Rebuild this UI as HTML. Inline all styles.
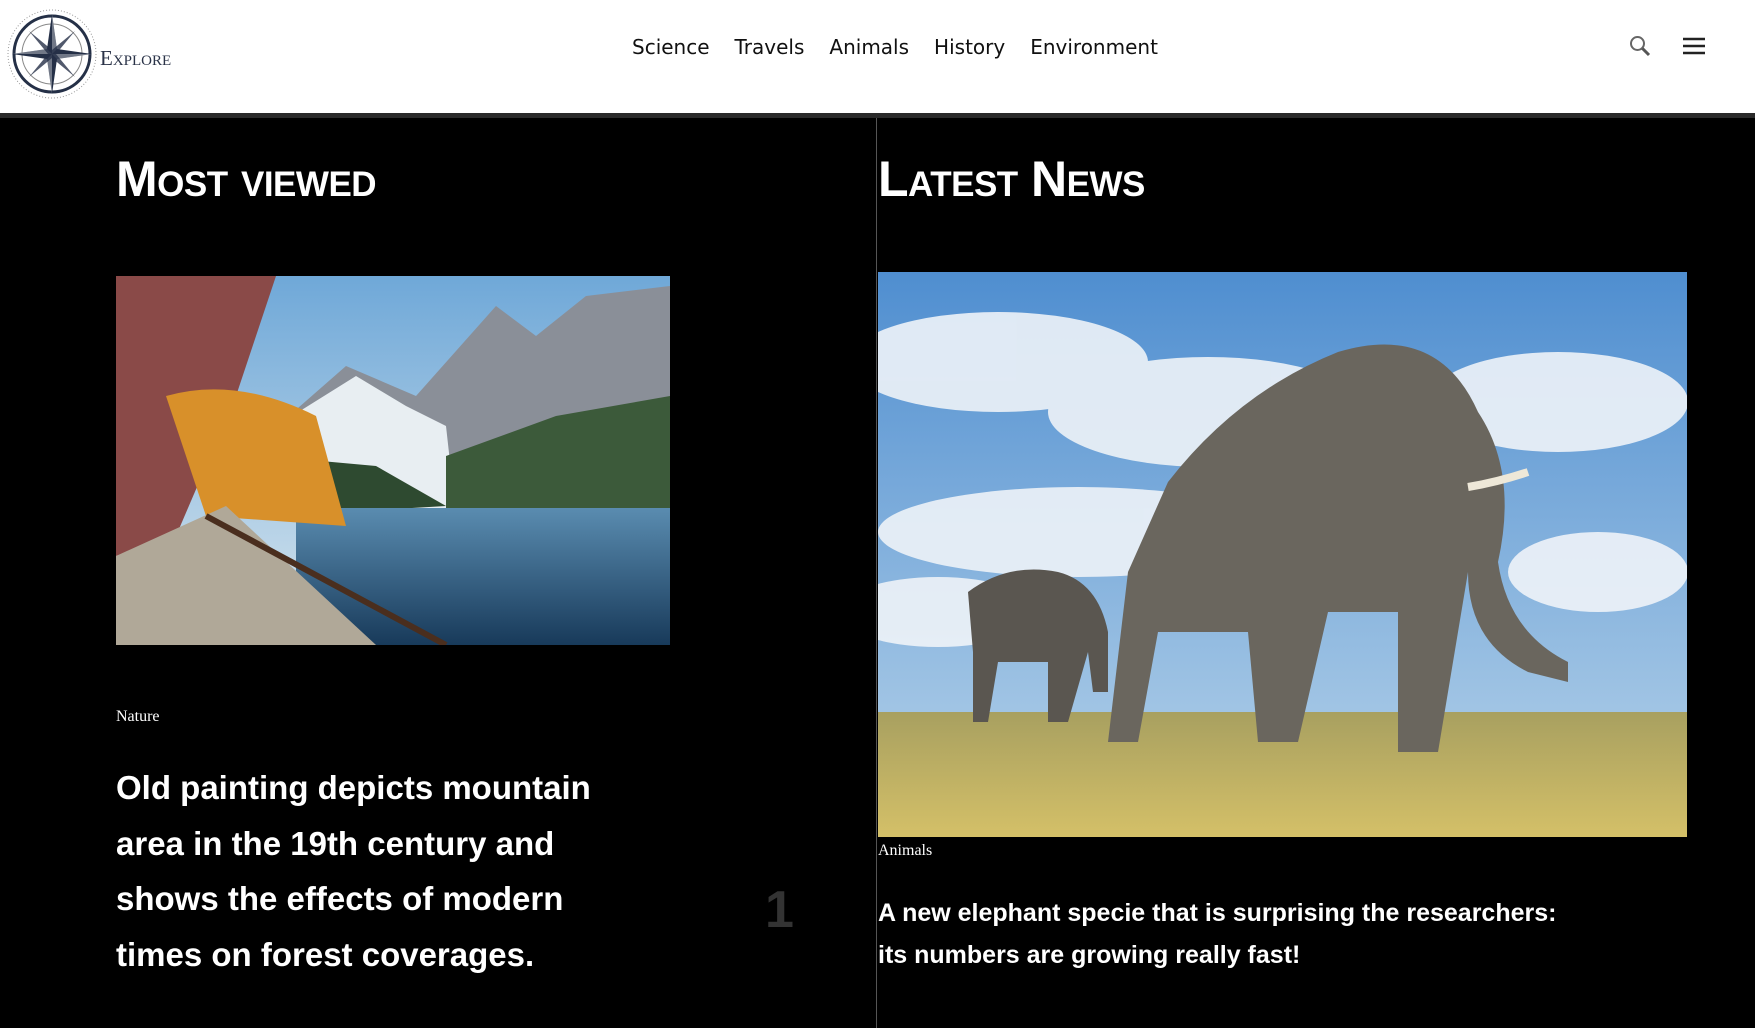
<!DOCTYPE html>
<html><head><meta charset="utf-8"><style>
*{margin:0;padding:0;box-sizing:border-box}
body{width:1755px;height:1028px;background:#000;overflow:hidden;font-family:"Liberation Sans",sans-serif;position:relative}
header{position:absolute;left:0;top:0;width:1755px;background:#fff;border-bottom:5px solid #2a2a2a;height:118px}
.logo{position:absolute;left:4px;top:6px}
.brand{position:absolute;left:100px;top:46px;font-family:"Liberation Serif",serif;font-size:21px;color:#2a3348;font-variant:small-caps}
nav{position:absolute;left:632px;top:35px;font-size:20px;color:#111;font-family:"DejaVu Sans","Liberation Sans",sans-serif}
nav span{margin-right:25px}
.narrow{font-family:"Liberation Sans Narrow","Liberation Sans",sans-serif;font-weight:bold;color:#fff}
h2{position:absolute;font-size:50px;font-variant:small-caps;letter-spacing:-0.5px}
.tag{position:absolute;font-family:"Liberation Serif",serif;font-size:16px;color:#fff}
.vl{position:absolute;left:876px;top:118px;width:1px;height:910px;background:#555}
</style></head><body>
<header>
<svg class="logo" width="96" height="96" viewBox="0 0 96 96">
<circle cx="48" cy="48" r="44" fill="none" stroke="#999" stroke-width="1" stroke-dasharray="1 2"/>
<circle cx="48" cy="48" r="38" fill="none" stroke="#253047" stroke-width="3"/>
<circle cx="48" cy="48" r="30" fill="none" stroke="#888" stroke-width="1"/>
<path d="M48 8 L53 43 L88 48 L53 53 L48 88 L43 53 L8 48 L43 43Z" fill="#253047"/>
<path d="M48 8 L53 43 L48 48Z M88 48 L53 53 L48 48Z M48 88 L43 53 L48 48Z M8 48 L43 43 L48 48Z" fill="#fff" opacity=".35"/>
<path d="M25 25 L48 44 L71 25 L52 48 L71 71 L48 52 L25 71 L44 48Z" fill="#253047" opacity=".8"/>
</svg>
<div class="brand">Explore</div>
<nav><span>Science</span><span>Travels</span><span>Animals</span><span>History</span><span>Environment</span></nav>
<svg style="position:absolute;left:1628px;top:34px" width="24" height="24" viewBox="0 0 24 24"><circle cx="9.5" cy="9.5" r="6.5" fill="none" stroke="#666" stroke-width="2"/><path d="M14.5 14.5 L21 21" stroke="#555" stroke-width="3"/></svg>
<svg style="position:absolute;left:1683px;top:37px" width="22" height="18" viewBox="0 0 22 18"><path d="M0 2H22M0 9H22M0 16H22" stroke="#222" stroke-width="2.6"/></svg>
</header>
<div class="vl"></div>
<h2 class="narrow" style="left:116px;top:150px">Most viewed</h2>
<h2 class="narrow" style="left:878px;top:150px">Latest News</h2>
<svg style="position:absolute;left:116px;top:276px" width="554" height="369" viewBox="0 0 554 369" preserveAspectRatio="none">
<defs><linearGradient id="s1" x1="0" y1="0" x2="0" y2="1"><stop offset="0" stop-color="#6fa8d8"/><stop offset="1" stop-color="#d8e6ee"/></linearGradient>
<linearGradient id="l1" x1="0" y1="0" x2="0" y2="1"><stop offset="0" stop-color="#5a8cb0"/><stop offset="1" stop-color="#183a5a"/></linearGradient></defs>
<rect width="554" height="369" fill="url(#s1)"/>
<path d="M150 160 L230 90 L300 120 L380 30 L420 60 L470 20 L554 10 L554 240 L150 240Z" fill="#8a8f98"/>
<path d="M160 150 L240 100 L290 130 L330 150 L340 240 L160 240Z" fill="#e8eef2"/>
<path d="M330 180 L440 140 L554 120 L554 240 L330 240Z" fill="#3c5a3a"/>
<path d="M150 180 L260 190 L330 230 L160 240Z" fill="#2e4a30"/>
<rect x="180" y="232" width="374" height="137" fill="url(#l1)"/>
<path d="M0 0 L160 0 L120 120 L60 260 L0 280Z" fill="#8a4a48"/>
<path d="M50 120 Q120 100 200 140 L230 250 L90 240Z" fill="#d8902a"/>
<path d="M0 280 L110 230 L260 369 L0 369Z" fill="#b0a898"/>
<path d="M90 240 L330 369" stroke="#4a2e1e" stroke-width="6"/>
</svg>
<div class="tag" style="left:116px;top:708px">Nature</div>
<div class="narrow" style="position:absolute;left:116px;top:760px;width:620px;font-size:33px;line-height:55.5px">Old painting depicts mountain<br>area in the 19th century and<br>shows the effects of modern<br>times on forest coverages.</div>
<div class="narrow" style="position:absolute;left:765px;top:880px;font-size:52px;color:#333">1</div>
<svg style="position:absolute;left:878px;top:272px" width="809" height="565" viewBox="0 0 809 565" preserveAspectRatio="none">
<defs><linearGradient id="s2" x1="0" y1="0" x2="0" y2="1"><stop offset="0" stop-color="#4f8ed0"/><stop offset="1" stop-color="#b8d4ea"/></linearGradient>
<linearGradient id="g2" x1="0" y1="0" x2="0" y2="1"><stop offset="0" stop-color="#a8a060"/><stop offset="1" stop-color="#d4c068"/></linearGradient></defs>
<rect width="809" height="565" fill="url(#s2)"/>
<g fill="#eef3f8" opacity=".9"><ellipse cx="120" cy="90" rx="150" ry="50"/><ellipse cx="330" cy="140" rx="160" ry="55"/><ellipse cx="200" cy="260" rx="200" ry="45"/><ellipse cx="680" cy="130" rx="130" ry="50"/><ellipse cx="60" cy="340" rx="100" ry="35"/><ellipse cx="720" cy="300" rx="90" ry="40"/></g>
<rect y="440" width="809" height="125" fill="url(#g2)"/>
<path d="M290 210 Q360 120 460 80 Q560 50 600 140 Q640 200 620 290 Q630 360 690 390 L690 410 L650 400 Q590 370 590 300 L560 480 L520 480 L520 340 L450 340 L420 470 L380 470 L370 360 L280 360 L260 470 L230 470 L250 300Z" fill="#6a665e"/>
<path d="M90 320 Q130 290 180 300 Q220 310 230 360 L230 420 L215 420 L210 380 L190 450 L170 450 L170 390 L120 390 L110 450 L95 450 L95 380Z" fill="#5a5650"/>
<path d="M590 215 Q620 210 650 200" stroke="#eee8d8" stroke-width="8" fill="none"/>
</svg>
<div class="tag" style="left:878px;top:842px">Animals</div>
<div class="narrow" style="position:absolute;left:878px;top:892px;width:820px;font-size:25px;line-height:42px">A new elephant specie that is surprising the researchers:<br>its numbers are growing really fast!</div>
</body></html>
